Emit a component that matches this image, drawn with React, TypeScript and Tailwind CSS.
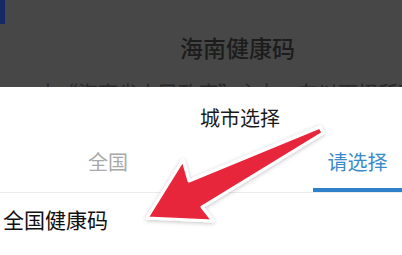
export default function App () {
  return (
    <div
      className="relative w-[402px] h-[255px] overflow-hidden bg-white"
      style={{ fontFamily: '"Noto Sans CJK SC", "Noto Sans", sans-serif' }}
    >
      {/* dimmed page behind the sheet */}
      <div className="relative h-[87px] bg-[#474747] overflow-hidden">
        <div className="absolute left-0 top-0 w-[5px] h-[24px] bg-[#152a64]" />
        <p className="pt-[32px] pl-[180px] text-[23px] leading-[30px] font-medium text-[#1c1c1c] whitespace-nowrap">
          海南健康码
        </p>
        <p className="mt-[17px] pl-[38px] text-[20px] leading-[28px] text-[#2a2a2a] whitespace-nowrap">
          由“海南省人民政府”主办，在以下择所可
        </p>
      </div>

      {/* bottom sheet */}
      <div className="flex flex-col">
        <p className="pt-[19px] h-[63px] text-center pl-[78px] text-[20px] leading-[24px] text-[#1a1a1a]">
          城市选择
        </p>

        <div className="flex justify-between items-end border-b border-[#ececec]">
          <div className="pl-[88px] pb-[18px] text-[20px] leading-[24px] text-[#a9a9a9]">
            全国
          </div>
          <div className="flex flex-col items-center w-[89px]">
            <span className="text-[20px] leading-[24px] text-[#3a8bcb]">请选择</span>
            <span className="mt-[14px] w-full h-[4px] bg-[#2f80c8]" />
          </div>
        </div>

        <p className="pt-[14px] pl-[3px] text-[21px] leading-[24px] text-[#111]">
          全国健康码
        </p>
      </div>

      {/* red pointer arrow */}
      <svg
        className="absolute inset-0 pointer-events-none"
        width="402"
        height="255"
        viewBox="0 0 402 255"
      >
        <defs>
          <filter id="sh" x="-20%" y="-20%" width="140%" height="140%">
            <feDropShadow dx="0" dy="1" stdDeviation="2" floodColor="#000" floodOpacity="0.25" />
          </filter>
        </defs>
        <polygon
          points="320,127 189,181 183,160 147,218 213,221 202,207 323,133"
          fill="#e8263a"
          stroke="#ffffff"
          strokeWidth="3"
          strokeLinejoin="round"
          filter="url(#sh)"
        />
      </svg>
    </div>
  );
}
